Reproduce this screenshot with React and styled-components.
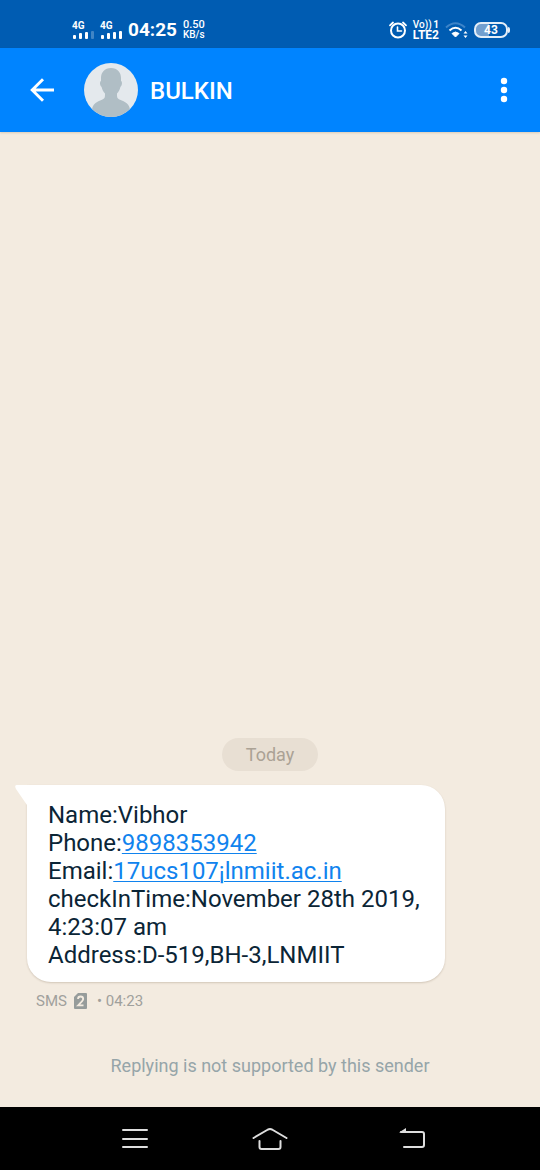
import React from "react";
import styled, { createGlobalStyle } from "styled-components";

const GlobalStyle = createGlobalStyle`
  * { box-sizing: border-box; }
  body {
    margin: 0;
    background: #f3ebe0;
    font-family: Roboto, "Liberation Sans", sans-serif;
  }
`;

const Screen = styled.div`
  display: flex;
  flex-direction: column;
  min-height: 100vh;
  background: #f3ebe0;
`;

const StatusBar = styled.div`
  display: flex;
  align-items: center;
  justify-content: space-between;
  height: 48px;
  padding: 12px 32px 0 72px;
  background: #005cb2;
  color: #fff;
`;

const StatusGroup = styled.div`
  display: flex;
  align-items: center;
  gap: 6px;
`;

const Signal = styled.div`
  display: flex;
  flex-direction: column;
  width: 22px;
  font-size: 10px;
  line-height: 10px;
  font-weight: 700;
`;

const Clock = styled.time`
  font-size: 19px;
  line-height: 24px;
  font-weight: 700;
`;

const Stack = styled.div`
  display: flex;
  flex-direction: column;
  white-space: nowrap;
`;

const StackLine = styled.span`
  display: flex;
  align-items: center;
  justify-content: space-between;
  height: 10px;
  font-size: ${(p) => p.$size}px;
  line-height: 10px;
  font-weight: ${(p) => p.$weight || 700};
`;

const Battery = styled.div`
  position: relative;
  width: 34px;
  height: 16px;
  border: 2px solid #e4eef8;
  border-radius: 7px;
  background: linear-gradient(to right, #729fcf 43%, transparent 43%);
  font-size: 12px;
  line-height: 12px;
  font-weight: 700;
  text-align: center;

  &::after {
    content: "";
    position: absolute;
    top: 3px;
    right: -4px;
    width: 2px;
    height: 6px;
    border-radius: 0 2px 2px 0;
    background: #e4eef8;
  }
`;

const AppBar = styled.header`
  position: relative;
  display: flex;
  align-items: center;
  height: 84px;
  padding: 0 12px 0 18px;
  background: #0084ff;
  color: #fff;
  box-shadow: 0 1px 2px rgba(120, 80, 20, 0.2);
`;

const IconButton = styled.button`
  display: flex;
  align-items: center;
  justify-content: center;
  width: 48px;
  height: 48px;
  padding: 0;
  border: 0;
  background: none;
  color: inherit;
  cursor: pointer;
`;

const Avatar = styled.svg`
  width: 54px;
  height: 54px;
  margin: 0 12px 0 18px;
`;

const Title = styled.h1`
  flex: 1;
  margin: 0;
  padding-top: 2px;
  font-size: 24px;
  line-height: 28px;
  font-weight: 500;
`;

const Thread = styled.main`
  flex: 1;
  display: flex;
  flex-direction: column;
  justify-content: flex-end;
  padding: 24px 27px 29px;
`;

const DayChip = styled.div`
  align-self: center;
  padding: 6px 24px;
  margin-bottom: 14px;
  border-radius: 17px;
  background: #e8dfd3;
  color: #aba295;
  font-size: 18px;
  line-height: 21px;
`;

const Bubble = styled.article`
  position: relative;
  align-self: flex-start;
  max-width: 86%;
  padding: 16px 21px 13px;
  border-radius: 0 24px 24px 24px;
  background: #fff;
  color: #0b2536;
  font-size: 24px;
  line-height: 28px;
  box-shadow: 0 1px 2px rgba(90, 70, 40, 0.22);
`;

const Tail = styled.svg`
  position: absolute;
  top: 0;
  left: -12px;
  width: 13px;
  height: 22px;
`;

const MessageLink = styled.a`
  color: #1083ee;
  text-decoration-thickness: 1px;
  text-underline-offset: 2px;
`;

const Meta = styled.div`
  display: flex;
  align-items: center;
  margin-top: 10px;
  padding-left: 9px;
  color: #a0a09c;
  font-size: 15px;
  line-height: 18px;
`;

const SimBadge = styled.svg`
  width: 13px;
  height: 16px;
  margin: 0 10px 0 7px;
`;

const Notice = styled.p`
  margin: 44px 0 0;
  color: #96a5a9;
  font-size: 18px;
  line-height: 24px;
  text-align: center;
`;

const NavBar = styled.nav`
  display: flex;
  align-items: center;
  justify-content: space-around;
  height: 63px;
  padding: 0 66px;
  background: #000;
  color: #dedede;
`;

function SignalBars({ faded }) {
  return (
    <Signal>
      4G
      <svg width="22" height="9" viewBox="0 0 22 9" fill="#fff" aria-hidden="true">
        <rect x="1" y="4" width="3" height="4" rx="1" />
        <rect x="7" y="2" width="3" height="6" rx="1" />
        <rect x="13" y="1" width="3" height="7" rx="1" />
        <rect x="19" y="0" width="3" height="8" rx="1" opacity={faded ? 0.25 : 1} />
      </svg>
    </Signal>
  );
}

export default function App() {
  return (
    <>
      <GlobalStyle />
      <Screen>
        <StatusBar>
          <StatusGroup>
            <SignalBars faded />
            <SignalBars />
            <Clock>04:25</Clock>
            <Stack>
              <StackLine $size={11} $weight={500}>0.50</StackLine>
              <StackLine $size={10} $weight={500}>KB/s</StackLine>
            </Stack>
          </StatusGroup>
          <StatusGroup>
            <svg width="18" height="18" viewBox="0 0 18 18" fill="none" stroke="#fff" strokeWidth="2" strokeLinecap="round" aria-label="Alarm">
              <circle cx="9" cy="9.500" r="7" />
              <path d="M8.500 6v4h4" strokeWidth="1.600" />
              <path d="M1 4.300 4 1.500M14 1.500l3 2.800" strokeWidth="1.800" />
            </svg>
            <Stack>
              <StackLine $size={10} $weight={500}>
                <span>Vo))</span>
                <b>1</b>
              </StackLine>
              <StackLine $size={12}>LTE2</StackLine>
            </Stack>
            <svg width="23" height="18" viewBox="0 0 23 18" fill="none" strokeWidth="2" aria-label="Wi-Fi">
              <path d="M1 6.500Q10.500-2 20 6.500" stroke="#3d84c8" />
              <path d="M4.500 9.500Q10.500 4 16.500 9.500" stroke="#fff" />
              <path d="M7 12.500Q10.500 9.500 14 12.500L10.500 16Z" fill="#fff" stroke="#fff" strokeWidth="1" />
              <path d="M18.500 12.500 20.500 10l2 2.500zM18.500 14.500h4L20.500 17z" fill="#fff" />
            </svg>
            <Battery>43</Battery>
          </StatusGroup>
        </StatusBar>

        <AppBar>
          <IconButton aria-label="Back">
            <svg width="24" height="24" viewBox="0 0 24 24" fill="none" stroke="currentColor" strokeWidth="2.900">
              <path d="M24 12H2.500M13 1.200 2.200 12 13 22.800" />
            </svg>
          </IconButton>
          <Avatar viewBox="0 0 54 54" aria-hidden="true">
            <defs>
              <clipPath id="avatar-clip"><circle cx="27" cy="27" r="27" /></clipPath>
            </defs>
            <g clipPath="url(#avatar-clip)">
              <rect width="54" height="54" fill="#e4e9ed" />
              <path
                fill="#b0bec5"
                d="M27 5c6.500 0 10 4.500 10 10v3c1.500.4 1.300 4.500-.6 6-.6 3-1.900 5-3.400 6.500 0 4 .2 5.200 3 6.200 5 1.800 9.500 4 10 10.300v7H8v-7c.5-6.300 5-8.500 10-10.300 2.800-1 3-2.200 3-6.200-1.500-1.500-2.800-3.500-3.400-6.500-1.900-1.500-2.100-5.600-.6-6v-3c0-5.500 3.500-10 10-10z"
              />
            </g>
          </Avatar>
          <Title>BULKIN</Title>
          <IconButton aria-label="More options">
            <svg width="8" height="26" viewBox="0 0 8 26" fill="currentColor">
              <circle cx="4" cy="4" r="3.200" />
              <circle cx="4" cy="13" r="3.200" />
              <circle cx="4" cy="22" r="3.200" />
            </svg>
          </IconButton>
        </AppBar>

        <Thread>
          <DayChip>Today</DayChip>
          <Bubble>
            <Tail viewBox="0 0 13 22" aria-hidden="true">
              <path d="M13 0H2Q-1 0 1 4L12 20V22H13Z" fill="#fff" />
            </Tail>
            Name:Vibhor<br />
            Phone:<MessageLink href="tel:9898353942">9898353942</MessageLink><br />
            Email:<MessageLink href="http://17ucs107¡lnmiit.ac.in">17ucs107¡lnmiit.ac.in</MessageLink><br />
            checkInTime:November 28th 2019, 4:23:07 am<br />
            Address:D-519,BH-3,LNMIIT
          </Bubble>
          <Meta>
            SMS
            <SimBadge viewBox="0 0 13 16" role="img" aria-label="SIM 2">
              <path d="M4 0h8q1 0 1 1v14q0 1-1 1H1q-1 0-1-1V4z" fill="#969c9b" />
              <path d="M4 6q0-2.500 2.600-2.500T9.200 6q0 1.500-5 6.300h5.300" fill="none" stroke="#f3ebe0" strokeWidth="1.800" />
            </SimBadge>
            • 04:23
          </Meta>
          <Notice>Replying is not supported by this sender</Notice>
        </Thread>

        <NavBar>
          <IconButton aria-label="Recent apps">
            <svg width="28" height="22" viewBox="-2 0 28 22" stroke="currentColor" strokeWidth="2" strokeLinecap="round">
              <path d="M1 2h24M1 11h24M1 19h24" />
            </svg>
          </IconButton>
          <IconButton aria-label="Home">
            <svg width="36" height="24" viewBox="0 0 36 24" fill="none" stroke="currentColor" strokeWidth="2" strokeLinecap="round" strokeLinejoin="round">
              <path d="M1.500 11 16 2.500Q18 1.500 20 2.500L34.500 11" />
              <path d="M7.500 14v6q0 2 2 2h17q2 0 2-2v-6" />
            </svg>
          </IconButton>
          <IconButton aria-label="Back">
            <svg width="40" height="22" viewBox="-12 0 40 22" fill="none" stroke="currentColor" strokeWidth="2" strokeLinecap="round">
              <path d="M3 4h21q2 0 2 2v11q0 2-2 2H6" />
              <path d="M1 4.500 8 0V4.500Z" fill="currentColor" stroke="none" />
            </svg>
          </IconButton>
        </NavBar>
      </Screen>
    </>
  );
}
